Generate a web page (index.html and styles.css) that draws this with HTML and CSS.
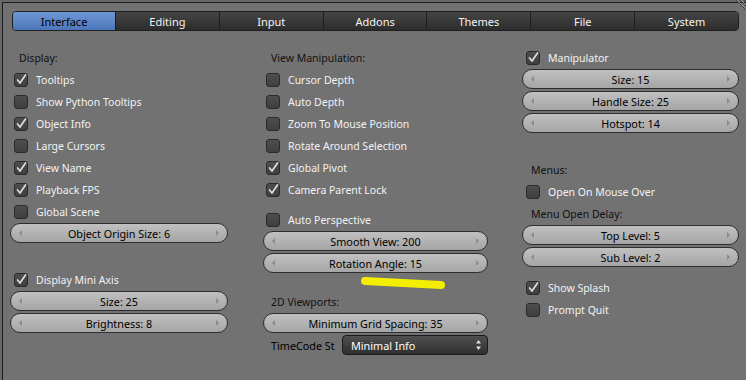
FILE: index.html
```html
<!DOCTYPE html>
<html>
<head>
<title>User Preferences</title>
<meta name="viewport" content="width=device-width, initial-scale=1">
<link rel="stylesheet" href="styles.css">
</head>
<body>
<div class="screen">
  <svg class="corner" width="12" height="10" viewBox="0 0 12 10">
    <path d="M2 0 L12 10 M6 0 L12 6 M10 0 L12 2" stroke="#3a3a3a" stroke-width="1"/>
    <path d="M3 0 L12 9 M7 0 L12 5" stroke="#9a9a9a" stroke-width="1"/>
  </svg>

  <div class="tabs">
    <div class="tab active">Interface</div>
    <div class="tab">Editing</div>
    <div class="tab">Input</div>
    <div class="tab">Addons</div>
    <div class="tab">Themes</div>
    <div class="tab">File</div>
    <div class="tab">System</div>
  </div>

  <div class="columns">
    <!-- left column -->
    <div class="col col-left">
      <div class="row heading">Display:</div>
      <div class="row check"><span class="box on"><svg viewBox="0 0 14 14"><path d="M3.5 7 L6 10 L11.5 2"/></svg></span>Tooltips</div>
      <div class="row check"><span class="box"></span>Show Python Tooltips</div>
      <div class="row check"><span class="box on"><svg viewBox="0 0 14 14"><path d="M3.5 7 L6 10 L11.5 2"/></svg></span>Object Info</div>
      <div class="row check"><span class="box"></span>Large Cursors</div>
      <div class="row check"><span class="box on"><svg viewBox="0 0 14 14"><path d="M3.5 7 L6 10 L11.5 2"/></svg></span>View Name</div>
      <div class="row check"><span class="box on"><svg viewBox="0 0 14 14"><path d="M3.5 7 L6 10 L11.5 2"/></svg></span>Playback FPS</div>
      <div class="row check"><span class="box"></span>Global Scene</div>
      <div class="row"><div class="num"><span class="arr left"></span><span class="val">Object Origin Size: 6</span><span class="arr right"></span></div></div>
      <div class="spacer-24"></div>
      <div class="row check"><span class="box on"><svg viewBox="0 0 14 14"><path d="M3.5 7 L6 10 L11.5 2"/></svg></span>Display Mini Axis</div>
      <div class="row"><div class="num"><span class="arr left"></span><span class="val">Size: 25</span><span class="arr right"></span></div></div>
      <div class="row"><div class="num"><span class="arr left"></span><span class="val">Brightness: 8</span><span class="arr right"></span></div></div>
    </div>

    <!-- middle column -->
    <div class="col col-mid">
      <div class="row heading">View Manipulation:</div>
      <div class="row check"><span class="box"></span>Cursor Depth</div>
      <div class="row check"><span class="box"></span>Auto Depth</div>
      <div class="row check"><span class="box"></span>Zoom To Mouse Position</div>
      <div class="row check"><span class="box"></span>Rotate Around Selection</div>
      <div class="row check"><span class="box on"><svg viewBox="0 0 14 14"><path d="M3.5 7 L6 10 L11.5 2"/></svg></span>Global Pivot</div>
      <div class="row check"><span class="box on"><svg viewBox="0 0 14 14"><path d="M3.5 7 L6 10 L11.5 2"/></svg></span>Camera Parent Lock</div>
      <div class="spacer-8"></div>
      <div class="row check"><span class="box"></span>Auto Perspective</div>
      <div class="row"><div class="num"><span class="arr left"></span><span class="val">Smooth View: 200</span><span class="arr right"></span></div></div>
      <div class="row"><div class="num"><span class="arr left"></span><span class="val">Rotation Angle: 15</span><span class="arr right"></span></div></div>
      <div class="spacer-16"></div>
      <div class="row heading">2D Viewports:</div>
      <div class="row"><div class="num"><span class="arr left"></span><span class="val">Minimum Grid Spacing: 35</span><span class="arr right"></span></div></div>
      <div class="row menu-row">
        <span class="menu-label">TimeCode St</span>
        <div class="menu">Minimal Info
          <svg class="updown" width="7" height="12" viewBox="0 0 7 12"><path d="M3.5 1 L6 4.5 L1 4.5 Z M3.5 11 L6 7.5 L1 7.5 Z" fill="#e0e0e0"/></svg>
        </div>
      </div>
      <svg class="marker" width="90" height="20" viewBox="0 0 90 20"><path d="M5 6 L81 10" stroke="#f4ee00" stroke-width="8" stroke-linecap="round"/></svg>
    </div>

    <!-- right column -->
    <div class="col col-right">
      <div class="row check"><span class="box on"><svg viewBox="0 0 14 14"><path d="M3.5 7 L6 10 L11.5 2"/></svg></span>Manipulator</div>
      <div class="row"><div class="num"><span class="arr left"></span><span class="val">Size: 15</span><span class="arr right"></span></div></div>
      <div class="row"><div class="num"><span class="arr left"></span><span class="val">Handle Size: 25</span><span class="arr right"></span></div></div>
      <div class="row"><div class="num"><span class="arr left"></span><span class="val">Hotspot: 14</span><span class="arr right"></span></div></div>
      <div class="spacer-24"></div>
      <div class="row heading">Menus:</div>
      <div class="row check"><span class="box"></span>Open On Mouse Over</div>
      <div class="row heading">Menu Open Delay:</div>
      <div class="row"><div class="num"><span class="arr left"></span><span class="val">Top Level: 5</span><span class="arr right"></span></div></div>
      <div class="row"><div class="num"><span class="arr left"></span><span class="val">Sub Level: 2</span><span class="arr right"></span></div></div>
      <div class="spacer-8"></div>
      <div class="row check"><span class="box on"><svg viewBox="0 0 14 14"><path d="M3.5 7 L6 10 L11.5 2"/></svg></span>Show Splash</div>
      <div class="row check"><span class="box"></span>Prompt Quit</div>
    </div>
  </div>
</div>
</body>
</html>
```

FILE: styles.css
```css
html, body { margin: 0; padding: 0; }
body { width: 746px; height: 380px; overflow: hidden; background-color: #686868; font-family: "Noto Sans", "DejaVu Sans", sans-serif; font-size: 10.5px; color: #000; }

.screen { position: relative; margin: 2px 0 0 2px; height: 378px; background-color: #727272; border-top: 1px solid #1c1c1c; border-left: 1px solid #1c1c1c; box-sizing: border-box; }
.corner { position: absolute; top: -3px; right: 0; }

/* tab bar */
.tabs { display: flex; width: 727px; height: 20px; margin: 8px 0 0 9px; border: 1px solid #1e1e1e; border-radius: 4px; box-sizing: border-box; overflow: hidden; }
.tab { flex: 1; display: flex; align-items: center; justify-content: center; padding-top: 1px; color: #f4f4f4; font-size: 11px; background: linear-gradient(#454545, #2c2c2c); border-left: 1px solid #1e1e1e; }
.tab:first-child { border-left: none; flex: 0 0 102px; }
.tab.active { color: #000; background: linear-gradient(#6f97d6, #4c76ba); }

/* columns */
.columns { display: flex; margin-top: 15px; padding-left: 7px; }
.col { display: flex; flex-direction: column; }
.col-left { width: 218px; }
.col-mid { width: 225px; margin-left: 35px; position: relative; }
.col-right { width: 217px; margin-left: 34px; }

.row { height: 22px; display: flex; align-items: center; box-sizing: border-box; }
.heading { padding-left: 9px; padding-top: 2px; color: #111; }
.col-mid .heading { padding-left: 8px; }
.spacer-8 { height: 8px; }
.spacer-16 { height: 16px; }
.spacer-24 { height: 24px; }

/* checkboxes */
.check { color: #f2f2f2; padding-left: 4px; padding-top: 2px; }
.col-mid .check { padding-left: 3px; }
.box { position: relative; width: 14px; height: 14px; margin-right: 8px; border: 1px solid #2a2a2a; border-radius: 3px; box-sizing: border-box; background: linear-gradient(#4e4e4e, #3f3f3f); }
.box svg { position: absolute; left: -1px; top: -1px; width: 14px; height: 14px; overflow: visible; }
.box svg path { fill: none; stroke: #dedede; stroke-width: 1.7; stroke-linecap: round; stroke-linejoin: round; }

/* number fields */
.num { display: flex; align-items: center; width: 100%; height: 20px; border: 1px solid #2e2e2e; border-radius: 10px; box-sizing: border-box; background: linear-gradient(#c0c0c0, #a5a5a5); color: #000; }
.num .val { flex: 1; text-align: center; font-size: 10.8px; padding-top: 1px; }
.arr { width: 0; height: 0; border-top: 3px solid transparent; border-bottom: 3px solid transparent; }
.arr.left { margin-left: 8px; border-right: 3px solid #8a8a8a; }
.arr.right { margin-right: 8px; border-left: 3px solid #8a8a8a; }

/* dropdown */
.menu-row { padding-left: 8px; }
.menu-label { width: 71px; font-size: 10.8px; padding-top: 1px; }
.menu { position: relative; flex: 1; height: 20px; display: flex; align-items: center; padding-left: 8px; padding-top: 1px; border: 1px solid #1a1a1a; border-radius: 4px; box-sizing: border-box; background: linear-gradient(#505050, #2f2f2f); color: #fff; font-size: 10.8px; }
.updown { position: absolute; right: 5px; top: 3px; }

/* annotation stroke drawn over the panel */
.marker { position: absolute; left: 97px; top: 229px; }
```
